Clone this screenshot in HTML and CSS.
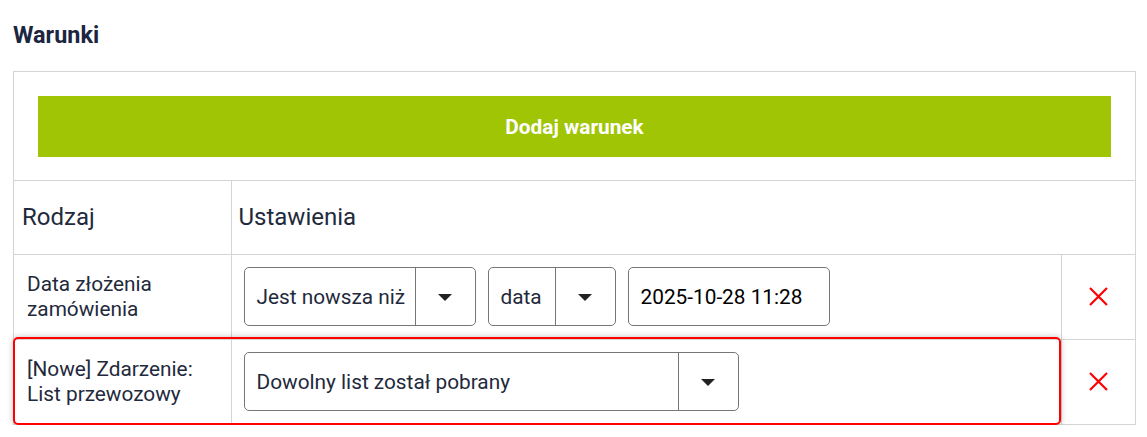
FILE: index.html
```html
<!DOCTYPE html>
<html lang="pl">
<head>
<meta charset="utf-8">
<link rel="stylesheet" href="styles.css">
</head>
<body>
<div class="page">
  <h2 class="title">Warunki</h2>
  <div class="panel">
    <div class="panel-top">
      <button class="btn-add">Dodaj warunek</button>
    </div>
    <table class="cond">
      <colgroup><col class="c1"><col class="c2"><col class="c3"></colgroup>
      <thead>
        <tr><th class="h1">Rodzaj</th><th class="h2" colspan="2">Ustawienia</th></tr>
      </thead>
      <tbody>
        <tr>
          <td class="label">Data złożenia<br>zamówienia</td>
          <td class="settings">
            <div class="controls">
              <div class="select w1"><span class="val">Jest nowsza niż</span><span class="arr"><i class="tri"></i></span></div>
              <div class="select w2"><span class="val">data</span><span class="arr"><i class="tri"></i></span></div>
              <div class="input">2025-10-28 11:28</div>
            </div>
          </td>
          <td class="del"><svg width="19" height="19" viewBox="0 0 19 19"><path d="M1 1L18 18M18 1L1 18" stroke="#ff0000" stroke-width="2.2" fill="none"/></svg></td>
        </tr>
        <tr class="hl-row">
          <td class="label">[Nowe] Zdarzenie:<br>List przewozowy<div class="highlight"></div></td>
          <td class="settings">
            <div class="controls">
              <div class="select w3"><span class="val">Dowolny list został pobrany</span><span class="arr"><i class="tri"></i></span></div>
            </div>
          </td>
          <td class="del"><svg width="19" height="19" viewBox="0 0 19 19"><path d="M1 1L18 18M18 1L1 18" stroke="#ff0000" stroke-width="2.2" fill="none"/></svg></td>
        </tr>
      </tbody>
    </table>
  </div>
</div>
</body>
</html>
```
FILE: styles.css
```css
* { box-sizing: border-box; }
html, body { margin: 0; padding: 0; background: #fff; }
body { font-family: Roboto, "Noto Sans", sans-serif; color: #1f2a3c; }
.page { padding: 0 12px 0 13px; }
.title {
  margin: 0;
  padding-top: 21px;
  height: 71px;
  font-size: 23.4px;
  font-weight: 700;
  line-height: 28px;
  color: #1b2640;
}
.panel { width: 1123px; border: 1px solid #d4d4d4; border-bottom: none; }
.panel-top { padding: 24px 24px 23px 24px; border-bottom: 1px solid #d4d4d4; }
.btn-add {
  display: block;
  width: 100%;
  height: 61px;
  border: none;
  background: #a0c505;
  color: #fff;
  font-family: Roboto, sans-serif;
  font-weight: 700;
  font-size: 20.8px;
  cursor: pointer;
}
.cond { width: 100%; border-collapse: collapse; table-layout: fixed; }
.cond col.c1 { width: 217px; }
.cond col.c3 { width: 73px; }
.cond th, .cond td { border: 1px solid #d4d4d4; padding: 0; }
.cond tr > :first-child { border-left: none; }
.cond tr > :last-child { border-right: none; }
.cond thead tr > th { border-top: none; }
.cond th {
  height: 73px;
  text-align: left;
  font-weight: 400;
  font-size: 24px;
  color: #1f2a3c;
}
.cond th.h1 { padding-left: 8px; }
.cond th.h2 { padding-left: 7px; }
.cond td { height: 85px; vertical-align: middle; }
.label { position: relative; padding-left: 13px !important; font-size: 20.8px; line-height: 25px; color: #1f2a3c; }
.settings { padding-left: 12px !important; }
.controls { display: flex; gap: 12px; align-items: center; }
.select, .input {
  height: 59px;
  border: 1px solid #767676;
  border-radius: 5px;
  display: flex;
  align-items: center;
  font-size: 20.8px;
  background: #fff;
}
.select .val { flex: 1; padding-left: 12px; white-space: nowrap; overflow: hidden; color: #1f2a3c; }
.select .arr {
  width: 60px;
  align-self: stretch;
  border-left: 1px solid #767676;
  display: flex;
  align-items: center;
  justify-content: center;
}
.tri { display: block; width: 0; height: 0; border-left: 7px solid transparent; border-right: 7px solid transparent; border-top: 7px solid #222; margin-top: 1px; }
.w1 { width: 232px; }
.w2 { width: 128px; }
.w3 { width: 495px; }
.input { width: 202px; padding-left: 12px; color: #000; }
.del { text-align: center; }
.del svg { display: block; margin: 0 auto; }
.highlight {
  position: absolute;
  left: -1px;
  top: -3px;
  width: 1048px;
  height: 88px;
  border: 2px solid #ff0000;
  border-radius: 5px;
  box-shadow: 0 0 6px rgba(0, 0, 0, 0.25);
  pointer-events: none;
}
```
